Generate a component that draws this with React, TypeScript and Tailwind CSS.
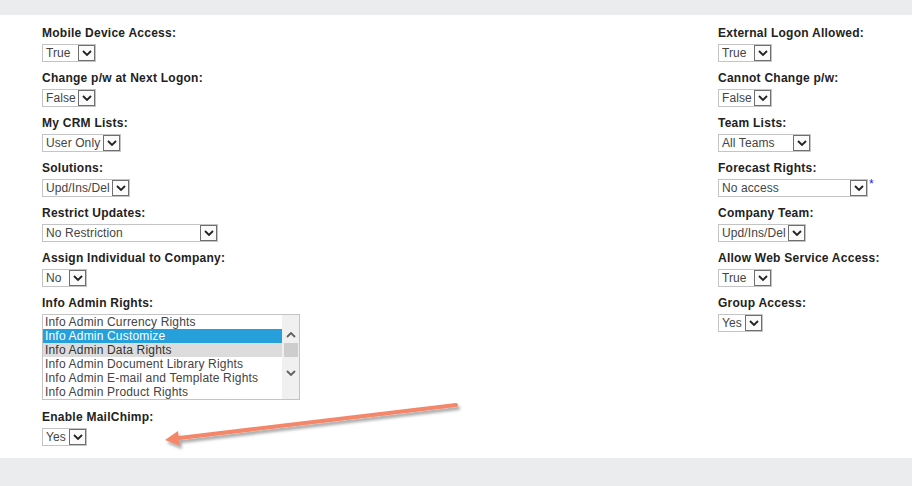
import React from "react";

type Field = { label: string; value: string; width: number; star?: boolean };

const leftFields: Field[] = [
  { label: "Mobile Device Access:", value: "True", width: 54 },
  { label: "Change p/w at Next Logon:", value: "False", width: 54 },
  { label: "My CRM Lists:", value: "User Only", width: 79 },
  { label: "Solutions:", value: "Upd/Ins/Del", width: 88 },
  { label: "Restrict Updates:", value: "No Restriction", width: 176 },
  { label: "Assign Individual to Company:", value: "No", width: 45 },
];

const rightFields: Field[] = [
  { label: "External Logon Allowed:", value: "True", width: 54 },
  { label: "Cannot Change p/w:", value: "False", width: 54 },
  { label: "Team Lists:", value: "All Teams", width: 93 },
  { label: "Forecast Rights:", value: "No access", width: 150, star: true },
  { label: "Company Team:", value: "Upd/Ins/Del", width: 88 },
  { label: "Allow Web Service Access:", value: "True", width: 54 },
  { label: "Group Access:", value: "Yes", width: 45 },
];

const adminRights = [
  "Info Admin Currency Rights",
  "Info Admin Customize",
  "Info Admin Data Rights",
  "Info Admin Document Library Rights",
  "Info Admin E-mail and Template Rights",
  "Info Admin Product Rights",
];

function Chevron({ down = true, color = "#222" }: { down?: boolean; color?: string }) {
  return (
    <svg width="10" height="6" viewBox="0 0 10 6">
      <path
        d={down ? "M1 1 L5 5 L9 1" : "M1 5 L5 1 L9 5"}
        fill="none"
        stroke={color}
        strokeWidth="1.8"
      />
    </svg>
  );
}

function Select({ value, width }: { value: string; width: number }) {
  return (
    <div
      className="flex h-[18px] border border-[#c4c4c4] bg-white"
      style={{ width }}
    >
      <div className="flex-1 overflow-hidden whitespace-nowrap pl-[3px] text-[12px] leading-[16px] tracking-[0.1px] text-[#444]">
        {value}
      </div>
      <div className="flex h-[16px] w-[17px] items-center justify-center border border-[#6f6f6f] bg-[#fbfbfb]">
        <Chevron />
      </div>
    </div>
  );
}

function FieldRow({ f }: { f: Field }) {
  return (
    <div className="mb-[8px]">
      <div className="h-[16px] text-[12px] font-bold leading-[16px] tracking-[0.25px] text-[#222]">{f.label}</div>
      <div className="mt-[3px] flex items-start">
        <Select value={f.value} width={f.width} />
        {f.star && <span className="ml-[1px] text-[12px] leading-[10px] text-[#1a1aff]">*</span>}
      </div>
    </div>
  );
}

function ListBox() {
  return (
    <div className="mt-[3px] flex h-[86px] w-[258px] border border-[#c4c4c4] bg-white">
      <div className="flex-1">
        {adminRights.map((r, i) => (
          <div
            key={r}
            className={`h-[14px] whitespace-nowrap pl-[2px] text-[12px] leading-[14px] tracking-[0.18px] ${
              i === 1 ? "bg-[#26a0da] text-white" : i === 2 ? "bg-[#dcdcdc] text-[#333]" : "text-[#444]"
            }`}
          >
            {r}
          </div>
        ))}
      </div>
      <div className="flex w-[17px] flex-col items-center bg-[#f0f0f0]">
        <div className="mt-[17px]">
          <Chevron down={false} color="#606060" />
        </div>
        <div className="mt-[5px] h-[14px] w-[14px] bg-[#cdcdcd]" />
        <div className="mt-[13px]">
          <Chevron color="#606060" />
        </div>
      </div>
    </div>
  );
}

export default function App() {
  return (
    <div className="relative h-[486px] w-[912px] bg-[#ebecee] font-['Liberation_Sans',Arial,sans-serif]">
      <div className="h-[15px]" />
      <div className="grid h-[443px] grid-cols-[676px_1fr] bg-white pl-[42px] pt-[10px]">
        <div>
          {leftFields.map((f) => (
            <FieldRow key={f.label} f={f} />
          ))}
          <div>
            <div className="h-[16px] text-[12px] font-bold leading-[16px] tracking-[0.25px] text-[#222]">Info Admin Rights:</div>
            <ListBox />
          </div>
          <div className="mt-[9px]">
            <FieldRow f={{ label: "Enable MailChimp:", value: "Yes", width: 45 }} />
          </div>
        </div>
        <div>
          {rightFields.map((f) => (
            <FieldRow key={f.label} f={f} />
          ))}
        </div>
      </div>

      {/* annotation arrow */}
      <svg className="pointer-events-none absolute left-0 top-0" width="912" height="486" viewBox="0 0 912 486">
        <defs>
          <filter id="sh" x="-10%" y="-50%" width="120%" height="200%">
            <feDropShadow dx="2" dy="3" stdDeviation="1.5" floodColor="#000" floodOpacity="0.35" />
          </filter>
        </defs>
        <g filter="url(#sh)">
          <line x1="456" y1="405" x2="175" y2="438.5" stroke="#f4876a" strokeWidth="4" strokeLinecap="round" />
          <polygon points="165,440 178,431 180,446" fill="#f4876a" />
        </g>
      </svg>
    </div>
  );
}
